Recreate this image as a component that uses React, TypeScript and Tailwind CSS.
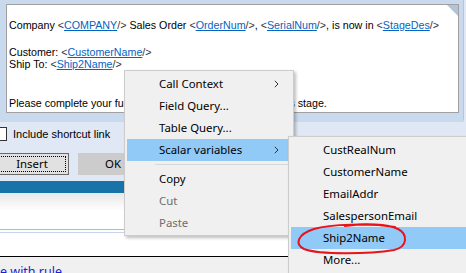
import React from 'react';

const Tag: React.FC<{ name: string }> = ({ name }) => (
  <>
    <span className="text-[#333]">&lt;</span>
    <span className="text-[#0563c1] underline">{name}</span>
    <span className="text-[#333]">/&gt;</span>
  </>
);

const Chevron = () => (
  <svg width="5" height="8" viewBox="0 0 5 8" className="absolute right-[12px] top-[7px]">
    <path d="M0.8 0.8 L4 4 L0.8 7.2" fill="none" stroke="#333" strokeWidth="1" />
  </svg>
);

interface ItemProps {
  label: string;
  active?: boolean;
  disabled?: boolean;
  sub?: boolean;
}

const MenuItem: React.FC<ItemProps> = ({ label, active, disabled, sub }) => (
  <div
    className={
      'relative mx-[2px] h-[22px] pl-[32px] flex items-center text-[11.4px] ' +
      (active ? 'bg-[#91c9f7] ' : '') +
      (disabled ? 'text-[#6d6d6d]' : 'text-[#000]')
    }
  >
    {label}
    {sub && <Chevron />}
  </div>
);

export default function App() {
  return (
    <div className="relative w-[466px] h-[273px] overflow-hidden bg-[#dfe8f4] font-['Noto_Sans',sans-serif]">
      {/* editor panel */}
      <div className="h-[122px] w-[464px] bg-[#c9daee] border-r border-[#b3c6df] rounded-br-[3px] pt-[4px] pl-[6px]">
        <div className="relative w-[453px] h-[109px] bg-white border border-[#a0a0a0] pl-[2px] pt-[14px] font-['Liberation_Sans',Arial,sans-serif] text-[10.7px] text-black whitespace-nowrap">
          <div className="leading-[13px]">
            Company <Tag name="COMPANY" /> Sales Order <Tag name="OrderNum" />, <Tag name="SerialNum" />, is now in{' '}
            <Tag name="StageDes" />
          </div>
          <div className="leading-[12px] mt-[14px]">
            Customer: <Tag name="CustomerName" />
          </div>
          <div className="leading-[12px]">
            Ship To: <Tag name="Ship2Name" />
          </div>
          <div className="leading-[12px] mt-[27px]">
            Please complete your further processing for this order at this stage.
          </div>
          <svg width="11" height="11" className="absolute right-0 top-0">
            <polygon points="0,0 11,0 11,11" fill="#b4c3d8" />
          </svg>
        </div>
      </div>

      {/* options row */}
      <div className="h-[31px] pt-[5px] flex items-start font-['Liberation_Sans',Arial,sans-serif] text-[11px] text-black">
        <div className="ml-[-7px] w-[14px] h-[14px] bg-white border border-[#333]" />
        <span className="ml-[6px] leading-[14px]">Include shortcut link</span>
      </div>

      {/* buttons */}
      <div className="flex h-[22px] text-[11.4px] text-black">
        <div className="relative ml-[-5px] w-[74px] h-[22px] bg-[#e1e1e1] border border-[#6b6b6b] flex items-center justify-center">
          <div className="absolute inset-[2px] border border-dotted border-black" />
          Insert
        </div>
        <div className="ml-[9px] w-[70px] h-[22px] bg-[#cccccc] flex items-center justify-center">OK</div>
      </div>

      {/* lower frame */}
      <div className="mt-[6px] h-[12px] bg-[#1874a8]" />
      <div className="h-[36px] bg-gradient-to-b from-[#e9e9e9] to-white to-[50%]" />
      <div className="h-px bg-[#b9b9b9]" />
      <div className="h-[2px] bg-white" />
      <div className="h-px bg-[#c5d5ee]" />
      <div className="h-[23px] bg-white" />
      <div className="h-px bg-black" />
      <div className="h-[20px] bg-[#f0f0f0] pt-[7px] text-[12.5px] leading-[15px] text-[#1c1cd2]">e with rule</div>

      {/* context menu */}
      <div className="absolute left-[124px] top-[70px] w-[170px] h-[166px] bg-[#f0f0f0] border border-[#cccccc] py-[2px] shadow-[2px_2px_3px_rgba(0,0,0,0.25)]">
        <MenuItem label="Call Context" sub />
        <MenuItem label="Field Query..." />
        <MenuItem label="Table Query..." />
        <MenuItem label="Scalar variables" sub active />
        <div className="h-[7px] flex items-center pl-[30px] pr-[1px]">
          <div className="h-px w-full bg-[#d7d7d7]" />
        </div>
        <MenuItem label="Copy" />
        <MenuItem label="Cut" disabled />
        <MenuItem label="Paste" disabled />
      </div>

      {/* submenu */}
      <div className="absolute left-[288px] top-[136px] w-[190px] h-[150px] bg-[#f0f0f0] border border-[#cccccc] pt-[2px] shadow-[2px_2px_3px_rgba(0,0,0,0.25)]">
        <MenuItem label="CustRealNum" />
        <MenuItem label="CustomerName" />
        <MenuItem label="EmailAddr" />
        <MenuItem label="SalespersonEmail" />
        <MenuItem label="Ship2Name" active />
        <MenuItem label="More..." />
      </div>

      {/* hand-drawn mark */}
      <svg width="122" height="40" viewBox="0 0 122 40" className="absolute left-[290px] top-[220px]">
        <path
          d="M105 7 C 80 3, 40 4, 24 9 C 8 14, 4 24, 14 29 C 30 35, 80 34, 104 30 C 118 27, 118 14, 108 9 C 98 4, 75 3, 55 6"
          fill="none"
          stroke="#e8141c"
          strokeWidth="2"
          strokeLinecap="round"
        />
      </svg>
    </div>
  );
}
